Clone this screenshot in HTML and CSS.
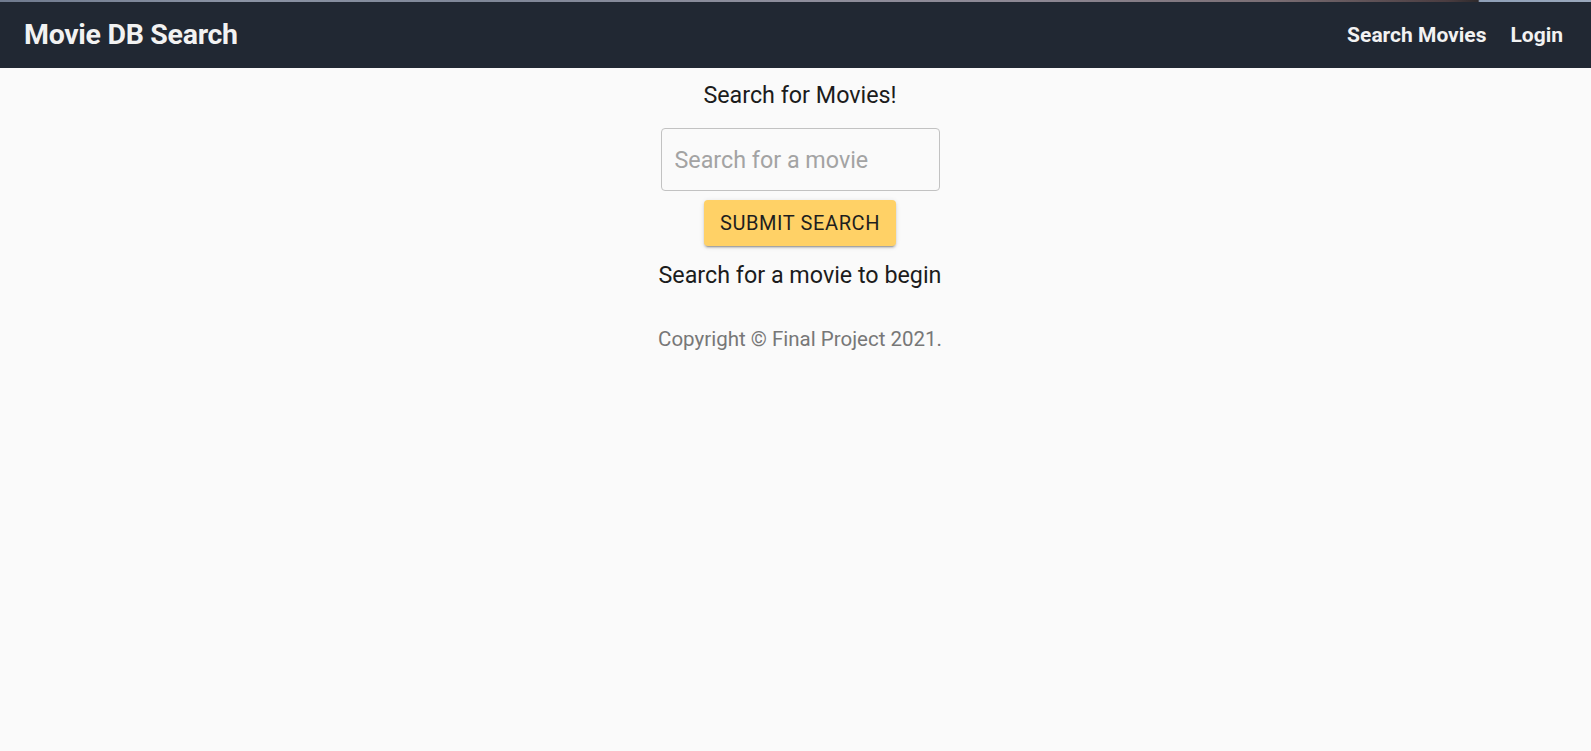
FILE: index.html
```html
<!DOCTYPE html>
<html lang="en">
<head>
<meta charset="utf-8">
<title>Movie DB Search</title>
<link rel="stylesheet" href="styles.css">
</head>
<body>
<div class="screen-strip"></div>
<header class="navbar">
  <div class="brand">Movie DB Search</div>
  <nav class="nav-links">
    <a class="nav-link" href="#">Search Movies</a>
    <a class="nav-link" href="#">Login</a>
  </nav>
</header>
<main class="content">
  <h1 class="page-title">Search for Movies!</h1>
  <form class="search-form" onsubmit="return false;">
    <input class="search-input" type="text" placeholder="Search for a movie">
    <button class="submit-btn" type="submit">Submit Search</button>
  </form>
  <p class="status">Search for a movie to begin</p>
  <footer class="copyright">Copyright © Final Project 2021.</footer>
</main>
</body>
</html>
```

FILE: styles.css
```css
* { box-sizing: border-box; }
html, body {
  margin: 0;
  padding: 0;
  background: #fafafa;
  font-family: Roboto, "Liberation Sans", sans-serif;
}
.screen-strip {
  height: 2px;
  background: linear-gradient(to right, #6f7a8e 0%, #8b93a4 15%, #7f8798 30%, #8e8e9c 50%, #8d8894 65%, #7a6e74 80%, #4a3c40 91%, #2e2a2c 92.9%, #8fa0b8 93%, #9aa8bc 100%);
}
.navbar {
  height: 66px;
  background: #212833;
  display: flex;
  align-items: center;
  justify-content: space-between;
  padding: 0 28px 0 24px;
}
.brand {
  color: #f2f2f2;
  font-size: 28.5px;
  font-weight: 700;
  letter-spacing: -0.3px;
  padding-bottom: 1px;
}
.nav-links {
  display: flex;
  gap: 24px;
}
.nav-link {
  color: #f2f2f2;
  font-size: 21px;
  font-weight: 700;
  text-decoration: none;
}
.content {
  display: flex;
  flex-direction: column;
  align-items: center;
  padding: 12px 0 0 9px;
}
.page-title {
  margin: 0;
  font-size: 23.3px;
  font-weight: 400;
  line-height: 30px;
  color: #1c1c1c;
}
.search-form {
  display: flex;
  flex-direction: column;
  align-items: center;
  margin-top: 18px;
}
.search-input {
  width: 279px;
  height: 63px;
  border: 1px solid #c2c2c2;
  border-radius: 4px;
  background: transparent;
  padding: 0 13px;
  font-family: Roboto, "Liberation Sans", sans-serif;
  font-size: 23.3px;
  color: #222;
  outline: none;
}
.search-input::placeholder { color: #a3a3a3; }
.submit-btn {
  margin-top: 9px;
  width: 192px;
  height: 46px;
  border: none;
  border-radius: 4px;
  background: #ffd166;
  color: #1e1e1e;
  font-family: Roboto, "Liberation Sans", sans-serif;
  font-size: 20px;
  font-weight: 400;
  text-transform: uppercase;
  letter-spacing: 0.6px;
  box-shadow: 0 3px 1px -2px rgba(0,0,0,0.2), 0 2px 2px 0 rgba(0,0,0,0.14), 0 1px 5px 0 rgba(0,0,0,0.12);
  cursor: pointer;
}
.status {
  margin: 14px 0 0;
  font-size: 23.3px;
  line-height: 30px;
  color: #1c1c1c;
}
.copyright {
  margin-top: 35px;
  font-size: 20.5px;
  line-height: 28px;
  color: #777;
}
```
